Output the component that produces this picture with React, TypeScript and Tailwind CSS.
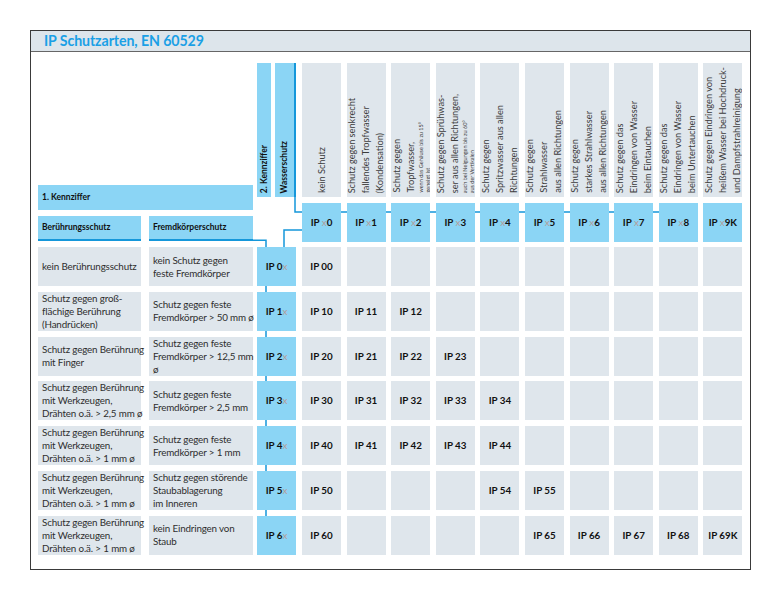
import React from "react";

const FONT = "font-['Lato','Liberation_Sans',sans-serif]";

type HeadCol = { code: string; lines: React.ReactNode };

const HEAD: HeadCol[] = [
  { code: "0", lines: <>kein Schutz</> },
  { code: "1", lines: <>Schutz gegen senkrecht<br />fallendes Tropfwasser<br />(Kondensation)</> },
  {
    code: "2",
    lines: (
      <>
        Schutz gegen<br />Tropfwasser,<br />
        <span className="text-[5.5px] leading-[7px] block">wenn das Gehäuse bis zu 15°<br />geneigt ist</span>
      </>
    ),
  },
  {
    code: "3",
    lines: (
      <>
        Schutz gegen Sprühwas-<br />ser aus allen Richtungen,<br />
        <span className="text-[5.5px] leading-[7px] block">auch bei Neigungen bis zu 60°<br />aus der Vertikalen</span>
      </>
    ),
  },
  { code: "4", lines: <>Schutz gegen<br />Spritzwasser aus allen<br />Richtungen</> },
  { code: "5", lines: <>Schutz gegen<br />Strahlwasser<br />aus allen Richtungen</> },
  { code: "6", lines: <>Schutz gegen<br />starkes Strahlwasser<br />aus allen Richtungen</> },
  { code: "7", lines: <>Schutz gegen das<br />Eindringen von Wasser<br />beim Eintauchen</> },
  { code: "8", lines: <>Schutz gegen das<br />Eindringen von Wasser<br />beim Untertauchen</> },
  { code: "9K", lines: <>Schutz gegen Eindringen von<br />heißem Wasser bei Hochdruck-<br />und Dampfstrahlreinigung</> },
];

type Row = { touch: React.ReactNode; body: React.ReactNode; digit: string; codes: (string | null)[] };

const WERKZEUG = (mm: string) => (
  <>Schutz gegen Berührung<br />mit Werkzeugen,<br />Drähten o.ä. &gt; {mm} mm ø</>
);

const ROWS: Row[] = [
  { touch: <>kein Berührungsschutz</>, body: <>kein Schutz gegen<br />feste Fremdkörper</>, digit: "0", codes: ["IP 00"] },
  {
    touch: <>Schutz gegen groß-<br />flächige Berührung<br />(Handrücken)</>,
    body: <>Schutz gegen feste<br />Fremdkörper &gt; 50 mm ø</>,
    digit: "1",
    codes: ["IP 10", "IP 11", "IP 12"],
  },
  {
    touch: <>Schutz gegen Berührung<br />mit Finger</>,
    body: <>Schutz gegen feste<br />Fremdkörper &gt; 12,5 mm<br />ø</>,
    digit: "2",
    codes: ["IP 20", "IP 21", "IP 22", "IP 23"],
  },
  {
    touch: WERKZEUG("2,5"),
    body: <>Schutz gegen feste<br />Fremdkörper &gt; 2,5 mm</>,
    digit: "3",
    codes: ["IP 30", "IP 31", "IP 32", "IP 33", "IP 34"],
  },
  {
    touch: WERKZEUG("1"),
    body: <>Schutz gegen feste<br />Fremdkörper &gt; 1 mm</>,
    digit: "4",
    codes: ["IP 40", "IP 41", "IP 42", "IP 43", "IP 44"],
  },
  {
    touch: WERKZEUG("1"),
    body: <>Schutz gegen störende<br />Staubablagerung<br />im Inneren</>,
    digit: "5",
    codes: ["IP 50", null, null, null, "IP 54", "IP 55"],
  },
  {
    touch: WERKZEUG("1"),
    body: <>kein Eindringen von<br />Staub</>,
    digit: "6",
    codes: ["IP 60", null, null, null, null, "IP 65", "IP 66", "IP 67", "IP 68", "IP 69K"],
  },
];

const X = () => <span className="text-[#b49c98] font-normal">x</span>;

function Connectors() {
  // blue guide lines drawn behind the boxes
  return (
    <svg className="absolute inset-0 w-full h-full" fill="none" stroke="#1597da" strokeWidth="1.5">
      <path d="M257 134 V149 H622" />
      <path d="M215 177.25 H228 V491" />
      <path d="M246 184 V167 H264" />
    </svg>
  );
}

export default function App() {
  return (
    <div className={`w-[780px] h-[596px] bg-white pt-[30px] pl-[30px] ${FONT}`}>
      <div className="w-[721px] h-[540px] border border-[#3a3a3a] flex flex-col">
        <div className="h-[21px] bg-[#dde5eb] border-b border-[#666] pl-[13px] flex items-center">
          <h1 className="text-[14.2px] font-bold text-[#1aa0e6] leading-none tracking-[-0.1px]">
            IP Schutzarten, EN 60529
          </h1>
        </div>

        <div className="relative ml-[7px] mt-[11px]">
          <Connectors />

          {/* header */}
          <div className="relative flex h-[179px]">
            <div className="w-[215px] flex flex-col justify-end pb-[1px]">
              <div className="h-[25px] bg-[#8bd5f5] flex items-center pl-[4px] text-[8.5px] font-bold text-[#111]">
                1. Kennziffer
              </div>
              <div className="flex mt-[6px]">
                <div className="w-[103px] h-[25px] bg-[#8bd5f5] border-b-2 border-[#1597da] flex items-center pl-[4px] text-[8.5px] font-bold text-[#111]">
                  Berührungsschutz
                </div>
                <div className="w-[104px] ml-[8px] h-[25px] bg-[#8bd5f5] border-b-2 border-[#1597da] flex items-center pl-[4px] text-[8.5px] font-bold text-[#111]">
                  Fremdkörperschutz
                </div>
              </div>
            </div>

            <div className="ml-[4px] w-[39px] flex">
              <div className="w-[14px] h-[134px] bg-[#8bd5f5] flex justify-center items-end pb-[4px]">
                <span className="[writing-mode:vertical-rl] rotate-180 text-[8.5px] font-bold text-[#111] leading-none whitespace-nowrap">
                  2. Kennziffer
                </span>
              </div>
              <div className="w-[21px] ml-[4px] h-[134px] bg-[#8bd5f5] border-r-2 border-[#1597da] flex justify-center items-end pb-[4px]">
                <span className="[writing-mode:vertical-rl] rotate-180 text-[8.5px] font-bold text-[#111] leading-none whitespace-nowrap">
                  Wasserschutz
                </span>
              </div>
            </div>

            <div className="ml-[6px] flex gap-x-[5.6px]">
              {HEAD.map((h) => (
                <div key={h.code} className="w-[39px] flex flex-col">
                  <div className="h-[134px] bg-[#dfe6ec] flex justify-center items-end pb-[4px] overflow-hidden">
                    <div className="[writing-mode:vertical-rl] rotate-180 text-[9.2px] leading-[14px] text-[#3c3c3c] whitespace-nowrap">
                      {h.lines}
                    </div>
                  </div>
                  <div className="mt-[6px] h-[39px] bg-[#8bd5f5] flex items-center justify-center text-[9.8px] font-bold text-[#111]">
                    IP&nbsp;<X />{h.code}
                  </div>
                </div>
              ))}
            </div>
          </div>

          {/* body */}
          <div className="relative mt-[5px] flex flex-col gap-y-[5.8px]">
            {ROWS.map((r) => (
              <div key={r.digit} className="flex h-[39px] text-[9.8px] leading-[13px] text-[#2e2e2e]">
                <div className="w-[103px] bg-[#dfe6ec] flex items-center pl-[4px] whitespace-nowrap tracking-[-0.15px]">
                  <div>{r.touch}</div>
                </div>
                <div className="w-[104px] ml-[8px] bg-[#dfe6ec] flex items-center pl-[4px] whitespace-nowrap tracking-[-0.15px]">
                  <div>{r.body}</div>
                </div>
                <div className="w-[39px] ml-[4px] bg-[#8bd5f5] flex items-center justify-center font-bold text-[#111]">
                  IP {r.digit}<X />
                </div>
                <div className="ml-[6px] flex gap-x-[5.6px]">
                  {Array.from({ length: 10 }, (_, i) => (
                    <div
                      key={i}
                      className="w-[39px] bg-[#dfe6ec] flex items-center justify-center font-bold text-[#111] whitespace-nowrap"
                    >
                      {r.codes[i] ?? ""}
                    </div>
                  ))}
                </div>
              </div>
            ))}
          </div>
        </div>
      </div>
    </div>
  );
}
